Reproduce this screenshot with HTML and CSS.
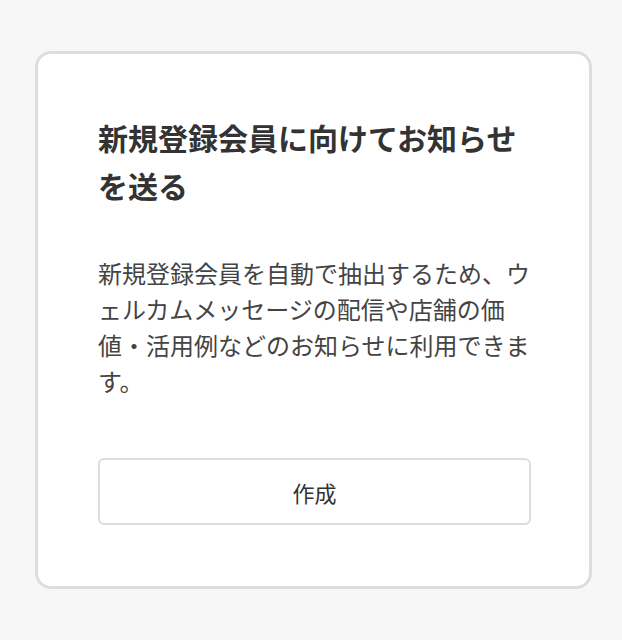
FILE: index.html
```html
<!DOCTYPE html>
<html lang="ja">
<head>
    <meta charset="UTF-8">
    <meta name="viewport" content="width=device-width, initial-scale=1.0">
    <title>お知らせ作成</title>
    <link rel="stylesheet" href="styles.css">
</head>
<body>
    <div class="card">
        <h2 class="card-title">新規登録会員に向けてお知らせを送る</h2>
        <p class="card-text">新規登録会員を自動で抽出するため、ウェルカムメッセージの配信や店舗の価値・活用例などのお知らせに利用できます。</p>
        <button class="create-button">作成</button>
    </div>
</body>
</html>
```

FILE: styles.css
```css
* {
    box-sizing: border-box;
    margin: 0;
    padding: 0;
}

body {
    font-family: "Noto Sans CJK JP", "Noto Sans", sans-serif;
    background: #f7f7f7;
    color: #333;
    padding: 51px 30px 0 35px;
}

.card {
    width: 557px;
    background: white;
    border: 3px solid #dddddd;
    border-radius: 16px;
    padding: 59px 58px 61px 60px;
}

.card-title {
    font-size: 30px;
    font-weight: bold;
    line-height: 48px;
    color: #333;
}

.card-text {
    margin-top: 46px;
    font-size: 24px;
    line-height: 36px;
    color: #444;
}

.create-button {
    display: block;
    width: 100%;
    height: 67px;
    margin-top: 59px;
    background: white;
    border: 2px solid #dddddd;
    border-radius: 6px;
    font-family: inherit;
    font-size: 22px;
    color: #333;
    cursor: pointer;
}
```
